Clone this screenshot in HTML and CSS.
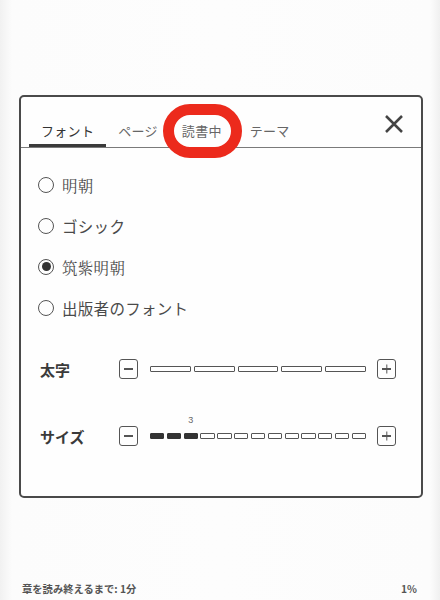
FILE: index.html
```html
<!DOCTYPE html>
<html lang="ja">
<head>
<meta charset="utf-8">
<link rel="stylesheet" href="styles.css">
</head>
<body>
<div class="screen">
  <div class="panel">
    <div class="header">
      <div class="tab active">フォント</div>
      <div class="tab">ページ</div>
      <div class="tab">読書中</div>
      <div class="tab theme">テーマ</div>
      <div class="close">
        <svg width="24" height="24" viewBox="0 0 24 24"><path d="M4 4 L20 20 M20 4 L4 20" stroke="#444" stroke-width="2.5" stroke-linecap="butt" fill="none"/></svg>
      </div>
    </div>
    <div class="options">
      <div class="option"><span class="radio"></span><span class="label serif">明朝</span></div>
      <div class="option"><span class="radio"></span><span class="label">ゴシック</span></div>
      <div class="option"><span class="radio checked"></span><span class="label serif">筑紫明朝</span></div>
      <div class="option"><span class="radio"></span><span class="label">出版者のフォント</span></div>
    </div>
    <div class="sliders">
      <div class="slider bold-row">
        <div class="slabel">太字</div>
        <div class="btn"><span class="minus"></span></div>
        <div class="track wide">
          <span class="seg"></span><span class="seg"></span><span class="seg"></span><span class="seg"></span><span class="seg"></span>
        </div>
        <div class="btn"><span class="minus"></span><span class="vbar"></span></div>
      </div>
      <div class="slider size-row">
        <div class="slabel">サイズ</div>
        <div class="btn"><span class="minus"></span></div>
        <div class="track narrow">
          <span class="seg on"></span><span class="seg on"></span><span class="seg on"><span class="val">3</span></span><span class="seg"></span><span class="seg"></span><span class="seg"></span><span class="seg"></span><span class="seg"></span><span class="seg"></span><span class="seg"></span><span class="seg"></span><span class="seg"></span><span class="seg"></span>
        </div>
        <div class="btn"><span class="minus"></span><span class="vbar"></span></div>
      </div>
    </div>
  </div>
  <div class="footer">
    <span>章を読み終えるまで: 1分</span>
    <span>1%</span>
  </div>
  <div class="annotation"></div>
</div>
</body>
</html>
```
FILE: styles.css
```css
* { box-sizing: border-box; }
html, body { margin: 0; padding: 0; }
body {
  background: #fafafa;
  font-family: "Noto Sans CJK JP", "Noto Sans", sans-serif;
  color: #444;
}
.screen {
  position: relative;
  width: 440px;
  height: 600px;
  display: flex;
  flex-direction: column;
  background: linear-gradient(90deg, #f1f1f1 0, #fcfcfc 12px, #fdfdfd 50%, #fcfcfc calc(100% - 10px), #f0f0f0 100%);
}
.panel {
  margin: 95px 0 0 19px;
  width: 404px;
  height: 403px;
  border: 2px solid #4a4a4a;
  border-radius: 5px;
  background: #fefefe;
  display: flex;
  flex-direction: column;
}
.header {
  height: 51px;
  display: flex;
  align-items: stretch;
  padding-left: 8px;
  border-bottom: 1px solid #7a7a7a;
}
.tab {
  display: flex;
  align-items: flex-end;
  padding: 0 12px 4px;
  border-bottom: 3px solid transparent;
  font-size: 13px;
  line-height: 18px;
  color: #666;
  letter-spacing: 0.3px;
}
.tab.theme { margin-left: 4px; }
.tab.active {
  color: #333;
  border-bottom-color: #3a3a3a;
}
.close {
  margin-left: auto;
  margin-top: 15px;
  margin-right: 15px;
  width: 24px;
  height: 24px;
}
.close svg { display: block; }
.options {
  padding: 16px 0 0 17px;
}
.option {
  height: 41px;
  display: flex;
  align-items: center;
}
.radio {
  width: 16px;
  height: 16px;
  border: 1.4px solid #555;
  border-radius: 50%;
  margin-right: 8px;
  display: flex;
  align-items: center;
  justify-content: center;
  flex: none;
}
.radio.checked::after {
  content: "";
  width: 9px;
  height: 9px;
  border-radius: 50%;
  background: #333;
}
.label {
  font-size: 15.5px;
  color: #4a4a4a;
  letter-spacing: 0.3px;
}
.label.serif {
  font-family: "Noto Serif CJK JP", "Noto Sans CJK JP", serif;
}
.sliders {
  padding: 31px 25px 0 19px;
  display: flex;
  flex-direction: column;
  gap: 47px;
}
.slider {
  display: flex;
  align-items: center;
  height: 20px;
}
.slabel {
  width: 79px;
  font-size: 15px;
  font-weight: bold;
  color: #3a3a3a;
}
.btn {
  position: relative;
  width: 19px;
  height: 20px;
  border: 1.4px solid #555;
  border-radius: 3px;
  flex: none;
  display: flex;
  align-items: center;
  justify-content: center;
}
.minus {
  width: 9px;
  height: 1.4px;
  background: #555;
}
.vbar {
  position: absolute;
  width: 1.4px;
  height: 9px;
  background: #555;
  left: 50%;
  top: 50%;
  transform: translate(-50%, -50%);
}
.track {
  flex: 1;
  display: flex;
  margin: 0 11px 0 12px;
}
.track.wide { gap: 3px; }
.track.narrow { gap: 2.5px; }
.seg {
  position: relative;
  flex: 1;
  border: 1px solid #555;
  border-radius: 1px;
  background: #fff;
  height: 6px;
}
.seg.on {
  background: #333;
  border-color: #333;
}
.val {
  position: absolute;
  left: 50%;
  bottom: 13px;
  transform: translateX(-50%);
  font-family: "Liberation Sans", sans-serif;
  font-size: 9px;
  line-height: 10px;
  color: #666;
}
.footer {
  margin-top: auto;
  padding: 0 23px 4px 22px;
  display: flex;
  justify-content: space-between;
  font-size: 10.3px;
  line-height: 14px;
  font-weight: bold;
  color: #555;
}
.annotation {
  position: absolute;
  left: 163px;
  top: 104px;
  width: 79px;
  height: 54px;
  border: 11px solid #ec2a1c;
  border-radius: 27px;
}
```
